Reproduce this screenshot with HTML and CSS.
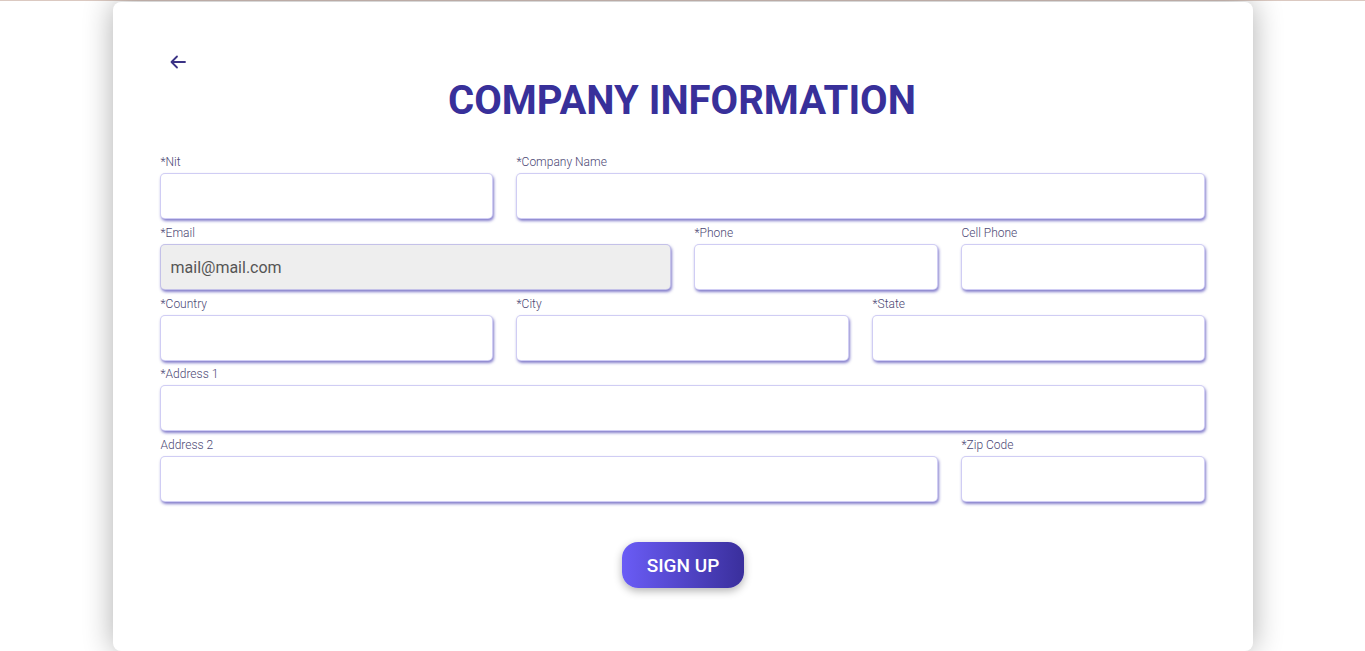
FILE: index.html
```html
<!DOCTYPE html>
<html lang="en">
<head>
<meta charset="utf-8">
<title>Company Information</title>
<link rel="stylesheet" href="styles.css">
</head>
<body>
<div class="topline"></div>
<main class="page">
  <section class="card">
    <div class="back" aria-label="Back">
      <svg width="16" height="14" viewBox="0 0 16 14" fill="none" stroke="#3b3385" stroke-width="1.8" stroke-linecap="round" stroke-linejoin="round">
        <path d="M15 7H2"/>
        <path d="M7 1.5L1.5 7L7 12.5"/>
      </svg>
    </div>
    <h1 class="title">COMPANY INFORMATION</h1>
    <form class="form">
      <div class="field span4"><label class="label">*Nit</label><input class="input" type="text"></div>
      <div class="field span8"><label class="label">*Company Name</label><input class="input" type="text"></div>
      <div class="field span6"><label class="label">*Email</label><input class="input disabled" type="text" value="mail@mail.com" disabled></div>
      <div class="field span3"><label class="label">*Phone</label><input class="input" type="text"></div>
      <div class="field span3"><label class="label">Cell Phone</label><input class="input" type="text"></div>
      <div class="field span4"><label class="label">*Country</label><input class="input" type="text"></div>
      <div class="field span4"><label class="label">*City</label><input class="input" type="text"></div>
      <div class="field span4"><label class="label">*State</label><input class="input" type="text"></div>
      <div class="field span12"><label class="label">*Address 1</label><input class="input" type="text"></div>
      <div class="field span9"><label class="label">Address 2</label><input class="input" type="text"></div>
      <div class="field span3"><label class="label">*Zip Code</label><input class="input" type="text"></div>
    </form>
    <div class="actions">
      <button class="signup" type="button">SIGN UP</button>
    </div>
  </section>
</main>
</body>
</html>
```
FILE: styles.css
```css
* { box-sizing: border-box; }
html, body { margin: 0; padding: 0; background: #ffffff; overflow: hidden; }
body { font-family: Roboto, "Liberation Sans", Arial, sans-serif; height: 651px; }

.topline { height: 1px; background: #dbc9c1; }

.page { display: flex; justify-content: center; }

.card {
  width: 1140px;
  height: 649px;
  margin-top: 1px;
  background: #ffffff;
  border-radius: 8px;
  box-shadow: 0 0 30px rgba(0, 0, 0, 0.32);
  padding: 53px 48px 0 47px;
}

.back { margin-left: 10px; width: 16px; height: 14px; }
.back svg { display: block; }

.title {
  margin: 6px 0 0 0;
  text-align: center;
  font-size: 40px;
  line-height: 52px;
  font-weight: 700;
  color: #38309a;
}

.form {
  margin-top: 28px;
  display: grid;
  grid-template-columns: repeat(12, 1fr);
  column-gap: 23px;
  row-gap: 6.75px;
}
.span3 { grid-column: span 3; }
.span4 { grid-column: span 4; }
.span6 { grid-column: span 6; }
.span8 { grid-column: span 8; }
.span9 { grid-column: span 9; }
.span12 { grid-column: span 12; }

.field { display: flex; flex-direction: column; gap: 4px; }

.label {
  font-size: 12px;
  line-height: 14px;
  font-weight: 300;
  color: #4c4874;
  padding-left: 1px;
}

.input {
  height: 46px;
  width: 100%;
  border: 1px solid rgba(110, 100, 220, 0.32);
  border-radius: 5px;
  background: #ffffff;
  box-shadow: 1px 2px 3px rgba(65, 55, 175, 0.65);
  padding: 2px 10px 0 10px;
  font-family: Roboto, "Liberation Sans", Arial, sans-serif;
  font-size: 16px;
  color: #555555;
  outline: none;
}
.input.disabled { background: #eeeeee; color: #555555; }

.actions { display: flex; justify-content: center; margin-top: 40px; padding-left: 2px; }

.signup {
  width: 122px;
  height: 46px;
  border: none;
  border-radius: 16px;
  background: linear-gradient(90deg, #6a5cf6 0%, #3a2f9c 100%);
  color: #ffffff;
  font-family: Roboto, "Liberation Sans", Arial, sans-serif;
  font-size: 19px;
  font-weight: 500;
  box-shadow: 0 3px 8px rgba(0, 0, 0, 0.3);
  cursor: pointer;
}
```
